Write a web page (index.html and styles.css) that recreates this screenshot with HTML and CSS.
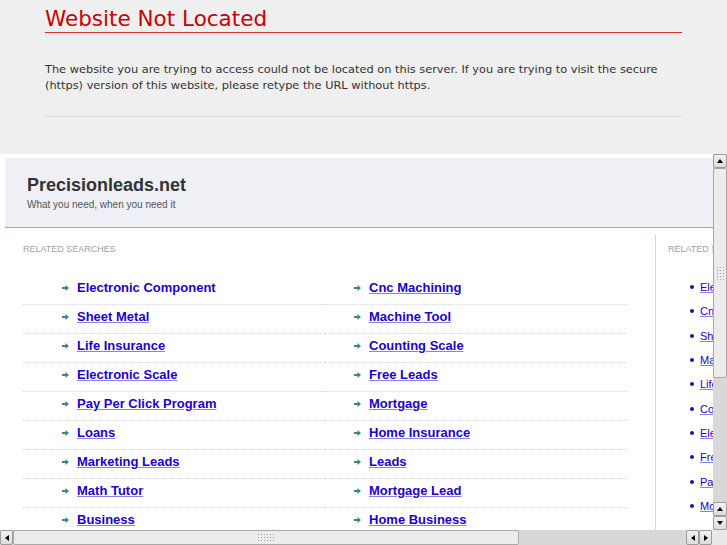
FILE: index.html
```html
<!DOCTYPE html>
<html lang="en">
<head>
    <meta charset="UTF-8">
    <meta name="viewport" content="width=device-width, initial-scale=1.0">
    <title>Website Not Located</title>
    <link rel="stylesheet" href="styles.css">
</head>
<body>
    <div class="notice">
        <h1>Website Not Located</h1>
        <p>The website you are trying to access could not be located on this server. If you are trying to visit the secure<br>(https) version of this website, please retype the URL without https.</p>
    </div>

    <div class="frame">
        <div class="frame-body">
            <div class="viewport">
                <div class="page">
                    <div class="header">
                        <div class="site-name">Precisionleads.net</div>
                        <div class="tagline">What you need, when you need it</div>
                    </div>
                    <div class="content">
                        <div class="main">
                            <div class="label">Related Searches</div>
                            <div class="columns">
                                <ul class="links left">
                                    <li><a class="plain" href="#">Electronic Component</a></li>
                                    <li><a href="#">Sheet Metal</a></li>
                                    <li><a href="#">Life Insurance</a></li>
                                    <li><a href="#">Electronic Scale</a></li>
                                    <li><a href="#">Pay Per Click Program</a></li>
                                    <li><a href="#">Loans</a></li>
                                    <li><a href="#">Marketing Leads</a></li>
                                    <li><a href="#">Math Tutor</a></li>
                                    <li><a href="#">Business</a></li>
                                </ul>
                                <ul class="links right">
                                    <li><a href="#">Cnc Machining</a></li>
                                    <li><a href="#">Machine Tool</a></li>
                                    <li><a href="#">Counting Scale</a></li>
                                    <li><a href="#">Free Leads</a></li>
                                    <li><a href="#">Mortgage</a></li>
                                    <li><a href="#">Home Insurance</a></li>
                                    <li><a href="#">Leads</a></li>
                                    <li><a href="#">Mortgage Lead</a></li>
                                    <li><a href="#">Home Business</a></li>
                                </ul>
                            </div>
                        </div>
                        <div class="side">
                            <div class="label">Related Searches</div>
                            <ul class="side-links">
                                <li><a href="#">Electronic Component</a></li>
                                <li><a href="#">Cnc Machining</a></li>
                                <li><a href="#">Sheet Metal</a></li>
                                <li><a href="#">Machine Tool</a></li>
                                <li><a href="#">Life Insurance</a></li>
                                <li><a href="#">Counting Scale</a></li>
                                <li><a href="#">Electronic Scale</a></li>
                                <li><a href="#">Free Leads</a></li>
                                <li><a href="#">Pay Per Click Program</a></li>
                                <li><a href="#">Mortgage</a></li>
                            </ul>
                        </div>
                    </div>
                </div>
            </div>
            <div class="vscroll">
                <div class="sb-btn up"></div>
                <div class="sb-thumb v"><span class="grip"></span></div>
                <div class="sb-track"></div>
                <div class="sb-btn up"></div>
                <div class="sb-btn down"></div>
            </div>
        </div>
        <div class="hscroll">
            <div class="sb-btn left"></div>
            <div class="sb-thumb h"><span class="grip"></span></div>
            <div class="sb-track"></div>
            <div class="sb-btn left"></div>
            <div class="sb-btn right"></div>
            <div class="sb-corner"></div>
        </div>
    </div>
</body>
</html>
```

FILE: styles.css
```css
body {
    margin: 0;
    background: #efefef;
    font-family: "DejaVu Sans", sans-serif;
    overflow: hidden;
}
.notice {
    margin: 0 45px;
    height: 154px;
}
.notice h1 {
    margin: 0;
    padding: 7px 0 1px;
    font-size: 21.5px;
    line-height: 24px;
    font-weight: normal;
    color: #c80000;
    border-bottom: 1px solid #d83030;
}
.notice p {
    margin: 28px 0 0;
    padding-bottom: 23px;
    font-size: 11.35px;
    line-height: 16px;
    color: #333;
    white-space: nowrap;
    border-bottom: 1px dotted #cfc6c6;
}

/* framed page */
.frame {
    height: 391px;
    display: flex;
    flex-direction: column;
    background: #fff;
}
.frame-body {
    flex: 1;
    display: flex;
    min-height: 0;
}
.viewport {
    flex: 1;
    overflow: hidden;
    background: #fff;
}
.page {
    width: 900px;
    padding: 4px 0 0 5px;
    font-family: "Liberation Sans", Arial, sans-serif;
}
.header {
    background: #eef0f5;
    padding: 16px 0 16px 22px;
    border-bottom: 1px solid #8eaae0;
}
.site-name {
    font-size: 18px;
    line-height: 22px;
    font-weight: bold;
    color: #333;
}
.tagline {
    margin-top: 3px;
    font-size: 10px;
    line-height: 12px;
    color: #555;
}
.content {
    display: flex;
    align-items: flex-start;
}
.main {
    width: 632px;
    margin-top: 7px;
    padding: 9px 0 0 18px;
    border-right: 1px solid #cfdaf0;
    height: 400px;
}
.label {
    font-size: 9px;
    line-height: 11px;
    text-transform: uppercase;
    color: #a0a0a0;
}
.columns {
    display: grid;
    grid-template-columns: 302px 302px;
    margin-top: 21px;
}
.links {
    list-style: none;
    margin: 0;
    padding: 0;
}
.links li {
    padding: 4px 0 9px;
    line-height: 15px;
    font-size: 13px;
    font-weight: bold;
    border-bottom: 1px dotted #d6d9e8;
    display: flex;
    align-items: center;
}
.links.left li { padding-left: 39px; }
.links.right li { padding-left: 29px; }
.links li::before {
    content: "";
    width: 7px;
    height: 6px;
    margin-right: 8px;
    background: url("data:image/svg+xml,%3Csvg xmlns='http://www.w3.org/2000/svg' width='7' height='6'%3E%3Cpath d='M0 2h3.5V0L7 3 3.5 6V4H0z' fill='%23368a80'/%3E%3C/svg%3E") no-repeat;
}
a {
    color: #2200cc;
    text-decoration-color: #8c80e0;
}
a.plain { text-decoration: none; }
.side {
    padding: 16px 0 0 12px;
}
.side-links {
    list-style: none;
    margin: 20px 0 0;
    padding: 0 0 0 22px;
}
.side-links li {
    font-size: 11px;
    line-height: 24.33px;
    white-space: nowrap;
}
.side-links li::before {
    content: "";
    display: inline-block;
    width: 4px;
    height: 4px;
    margin: 0 6px 2px 0;
    border-radius: 50%;
    background: #1c14b0;
}

/* scrollbars */
.vscroll {
    width: 14px;
    display: flex;
    flex-direction: column;
    background: #d9d9d9;
}
.hscroll {
    height: 15px;
    display: flex;
    background: #d9d9d9;
}
.sb-track {
    flex: 1;
    background: #d8d8d8;
}
.sb-btn {
    box-sizing: border-box;
    width: 14px;
    height: 14px;
    background: linear-gradient(#f2f2f2, #dcdcdc);
    border: 1px solid #9c9c9c;
    border-radius: 2px;
    display: flex;
    align-items: center;
    justify-content: center;
}
.hscroll .sb-btn {
    width: 13px;
    height: 15px;
}
.sb-btn::before {
    content: "";
    width: 0;
    height: 0;
}
.sb-btn.up::before {
    border-left: 3px solid transparent;
    border-right: 3px solid transparent;
    border-bottom: 4px solid #000;
}
.sb-btn.down::before {
    border-left: 3px solid transparent;
    border-right: 3px solid transparent;
    border-top: 4px solid #000;
}
.sb-btn.left::before {
    border-top: 3px solid transparent;
    border-bottom: 3px solid transparent;
    border-right: 4px solid #000;
}
.sb-btn.right::before {
    border-top: 3px solid transparent;
    border-bottom: 3px solid transparent;
    border-left: 4px solid #000;
}
.sb-thumb {
    box-sizing: border-box;
    background: #ececec;
    border: 1px solid #a8a8a8;
    border-radius: 2px;
    display: flex;
    align-items: center;
    justify-content: center;
}
.sb-thumb.v { height: 210px; }
.sb-thumb.h { width: 506px; }
.grip {
    background-image: radial-gradient(#a0a0a0 40%, transparent 45%);
    background-size: 3px 3px;
}
.sb-thumb.v .grip { width: 9px; height: 15px; }
.sb-thumb.h .grip { width: 18px; height: 9px; }
.sb-corner {
    width: 15px;
    background: #e8e8e8;
}
```
